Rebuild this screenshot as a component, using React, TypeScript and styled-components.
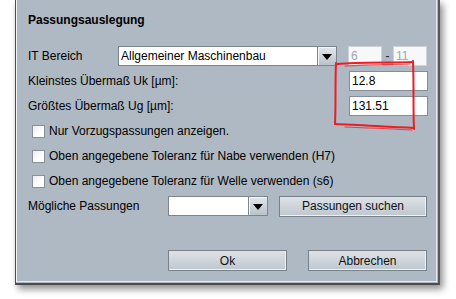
import styled, { createGlobalStyle } from 'styled-components';

const GlobalStyle = createGlobalStyle`
  html, body {
    margin: 0;
    padding: 0;
    background: #ffffff;
  }
  body {
    font-family: 'Liberation Sans', Arial, sans-serif;
    font-size: 12px;
    color: #000000;
  }
`;

const Page = styled.div`
  position: relative;
  width: 456px;
  height: 299px;
  overflow: hidden;
  background: #ffffff;
`;

const Dialog = styled.div`
  box-sizing: border-box;
  margin-left: 15px;
  width: 425px;
  height: 285px;
  background: #afb9c3;
  border-left: 1px solid #4c4c4c;
  border-right: 2px solid #55595d;
  border-bottom: 2px solid #4c4c4c;
  box-shadow: 3px 4px 7px rgba(0, 0, 0, 0.45);
  padding: 13px 10px 0 12px;
  position: relative;

  &::after {
    content: '';
    position: absolute;
    left: 0;
    top: 0;
    right: 1px;
    bottom: 1px;
    border-left: 1px solid #f2f4f6;
    border-right: 1px solid #e6eaee;
    border-bottom: 1px solid #e6eaee;
    pointer-events: none;
  }
`;

const Title = styled.div`
  font-weight: bold;
  line-height: 14px;
  height: 14px;
`;

const Form = styled.div`
  display: flex;
  flex-direction: column;
  gap: 5px;
  margin-top: 19px;
`;

const Row = styled.div<{ $indent?: number }>`
  display: flex;
  align-items: center;
  height: 20px;
  padding-left: ${p => p.$indent ?? 0}px;
`;

const Label = styled.span<{ $width?: number }>`
  width: ${p => (p.$width ? `${p.$width}px` : 'auto')};
  flex: ${p => (p.$width ? 'none' : '1')};
  white-space: nowrap;
  line-height: 14px;
`;

const Combo = styled.div<{ $width: number }>`
  box-sizing: border-box;
  display: flex;
  width: ${p => p.$width}px;
  height: 20px;
  border: 1px solid #7c868f;
  background: #ffffff;
`;

const ComboText = styled.span`
  flex: 1;
  padding-left: 2px;
  line-height: 18px;
  white-space: nowrap;
  overflow: hidden;
`;

const ArrowButton = styled.span`
  width: 18px;
  display: flex;
  align-items: center;
  justify-content: center;
  border-left: 1px solid #7c868f;
  background: linear-gradient(#e3e7eb, #b9c2cb);
  box-shadow: inset 1px 1px 0 #f4f6f8;
`;

const Arrow = styled.span`
  width: 0;
  height: 0;
  border-left: 5px solid transparent;
  border-right: 5px solid transparent;
  border-top: 6px solid #000000;
  margin-top: 1px;
`;

const Field = styled.div<{ $width: number; $disabled?: boolean }>`
  box-sizing: border-box;
  width: ${p => p.$width}px;
  height: 20px;
  padding-left: 2px;
  line-height: 18px;
  background: ${p => (p.$disabled ? '#f7f8f9' : '#ffffff')};
  border: 1px solid ${p => (p.$disabled ? '#cdd3d9' : '#858e97')};
  color: ${p => (p.$disabled ? '#a3a7ab' : '#000000')};
`;

const Dash = styled.span`
  width: 11px;
  text-align: center;
  color: #222222;
`;

const Spacer = styled.span<{ $width: number }>`
  width: ${p => p.$width}px;
  flex: none;
`;

const CheckBox = styled.span`
  box-sizing: border-box;
  width: 13px;
  height: 13px;
  margin-right: 4px;
  background: linear-gradient(135deg, #e9ecef, #ffffff 60%);
  border: 1px solid #88919a;
`;

const Button = styled.div<{ $width: number }>`
  box-sizing: border-box;
  width: ${p => p.$width}px;
  height: 21px;
  display: flex;
  align-items: center;
  justify-content: center;
  border: 1px solid #78818a;
  background: linear-gradient(#dde2e7, #bfc7cf);
  box-shadow: inset -1px -1px 0 #eef1f4;
  color: #111111;
`;

const ButtonRow = styled.div`
  display: flex;
  gap: 21px;
  margin-top: 34px;
  padding-left: 140px;
`;

const Annotation = styled.svg`
  position: absolute;
  left: 0;
  top: 0;
  pointer-events: none;
`;

export default function App() {
  return (
    <Page>
      <GlobalStyle />
      <Dialog>
        <Title>Passungsauslegung</Title>
        <Form>
          <Row>
            <Label $width={90}>IT Bereich</Label>
            <Combo $width={219}>
              <ComboText>Allgemeiner Maschinenbau</ComboText>
              <ArrowButton><Arrow /></ArrowButton>
            </Combo>
            <Spacer $width={11} />
            <Field $width={34} $disabled>6</Field>
            <Dash>-</Dash>
            <Field $width={34} $disabled>11</Field>
          </Row>
          <Row>
            <Label>Kleinstes Übermaß Uk [µm]:</Label>
            <Field $width={79}>12.8</Field>
          </Row>
          <Row>
            <Label>Größtes Übermaß Ug [µm]:</Label>
            <Field $width={79}>131.51</Field>
          </Row>
          <Row $indent={4}>
            <CheckBox />
            <Label>Nur Vorzugspassungen anzeigen.</Label>
          </Row>
          <Row $indent={4}>
            <CheckBox />
            <Label>Oben angegebene Toleranz für Nabe verwenden (H7)</Label>
          </Row>
          <Row $indent={4}>
            <CheckBox />
            <Label>Oben angegebene Toleranz für Welle verwenden (s6)</Label>
          </Row>
          <Row>
            <Label $width={140}>Mögliche Passungen</Label>
            <Combo $width={100}>
              <ComboText />
              <ArrowButton><Arrow /></ArrowButton>
            </Combo>
            <Spacer $width={11} />
            <Button $width={148}>Passungen suchen</Button>
          </Row>
        </Form>
        <ButtonRow>
          <Button $width={119}>Ok</Button>
          <Button $width={119}>Abbrechen</Button>
        </ButtonRow>
      </Dialog>
      <Annotation width="456" height="299" viewBox="0 0 456 299">
        <g fill="none" stroke="#ee1c24" strokeLinecap="round" strokeLinejoin="round">
          <path d="M337 64 C360 62 390 63 413 62" strokeWidth="2" />
          <path d="M345 66 C370 64 395 65 410 64" strokeWidth="1.2" opacity="0.75" />
          <path d="M413 61 C414 85 413 108 414 129" strokeWidth="2" />
          <path d="M336 63 C335 85 336 105 335 124" strokeWidth="2" />
          <path d="M335 124 C360 125 390 127 414 128" strokeWidth="2" />
          <path d="M345 127 C370 128 395 129 412 130" strokeWidth="1.2" opacity="0.75" />
        </g>
      </Annotation>
    </Page>
  );
}
